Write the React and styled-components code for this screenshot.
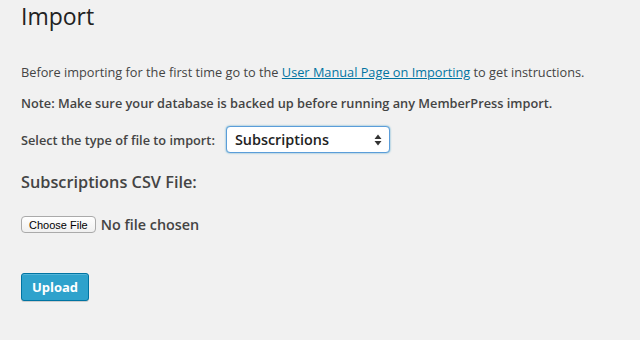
import React from 'react';
import styled, { createGlobalStyle } from 'styled-components';

const GlobalStyle = createGlobalStyle`
  html, body {
    margin: 0;
    padding: 0;
    background: #f1f1f1;
  }
  body {
    font-family: 'Open Sans', sans-serif;
    color: #444;
  }
`;

const Wrap = styled.div`
  width: 640px;
  height: 340px;
  box-sizing: border-box;
  padding: 2px 0 0 21px;
  overflow: hidden;
`;

const Title = styled.h2`
  margin: 0;
  font-size: 23px;
  font-weight: 400;
  line-height: 29px;
  color: #222;
`;

const Text = styled.p`
  margin: ${(p) => p.$top || 0}px 0 0;
  font-size: 12.75px;
  line-height: 19px;
  font-weight: ${(p) => (p.$bold ? 600 : 400)};
`;

const Link = styled.a`
  color: #0074a2;
  text-decoration: underline;
`;

const SelectRow = styled.div`
  display: flex;
  align-items: center;
  gap: 11px;
  margin-top: 13px;
`;

const Label = styled.label`
  font-size: 12.75px;
  font-weight: 600;
`;

const FakeSelect = styled.div`
  width: 164px;
  height: 27px;
  box-sizing: border-box;
  display: flex;
  align-items: center;
  justify-content: space-between;
  padding: 0 7px 0 8px;
  background: #fff;
  border: 1px solid #5b9dd9;
  border-radius: 4px;
  box-shadow: 0 0 2px rgba(30, 140, 190, 0.8);
  font-size: 14.4px;
  font-weight: 600;
  color: #222;
`;

const Heading = styled.h3`
  margin: 18px 0 0;
  font-size: 16.3px;
  font-weight: 600;
  line-height: 22px;
`;

const FileRow = styled.div`
  display: flex;
  align-items: center;
  gap: 5px;
  margin-top: 22px;
`;

const FileButton = styled.button`
  height: 17px;
  padding: 0 7px;
  font-family: 'Liberation Sans', Arial, sans-serif;
  font-size: 11px;
  color: #000;
  background: linear-gradient(#fff, #f0f0f0);
  border: 1px solid #aaa;
  border-radius: 4px;
`;

const FileText = styled.span`
  font-size: 14.4px;
  font-weight: 600;
`;

const Upload = styled.button`
  margin-top: 39px;
  width: 68px;
  height: 28px;
  padding: 0;
  font-family: 'Open Sans', sans-serif;
  font-size: 13px;
  font-weight: 700;
  color: #fff;
  background: #2ea2cc;
  border: 1px solid #0074a2;
  border-radius: 3px;
  box-shadow: inset 0 1px 0 rgba(120, 200, 230, 0.5), 0 1px 0 rgba(0, 0, 0, 0.15);
`;

function Arrows() {
  return (
    <svg width="8" height="12" viewBox="0 0 8 12">
      <path d="M4 0.5 L7.5 5 L0.5 5 Z M4 11.5 L7.5 7 L0.5 7 Z" fill="#333" />
    </svg>
  );
}

export default function App() {
  return (
    <>
      <GlobalStyle />
      <Wrap>
        <Title>Import</Title>
        <Text $top={32}>
          Before importing for the first time go to the{' '}
          <Link href="#">User Manual Page on Importing</Link> to get instructions.
        </Text>
        <Text $top={12} $bold>
          Note: Make sure your database is backed up before running any MemberPress import.
        </Text>
        <SelectRow>
          <Label>Select the type of file to import:</Label>
          <FakeSelect>
            <span>Subscriptions</span>
            <Arrows />
          </FakeSelect>
        </SelectRow>
        <Heading>Subscriptions CSV File:</Heading>
        <FileRow>
          <FileButton>Choose File</FileButton>
          <FileText>No file chosen</FileText>
        </FileRow>
        <Upload>Upload</Upload>
      </Wrap>
    </>
  );
}
